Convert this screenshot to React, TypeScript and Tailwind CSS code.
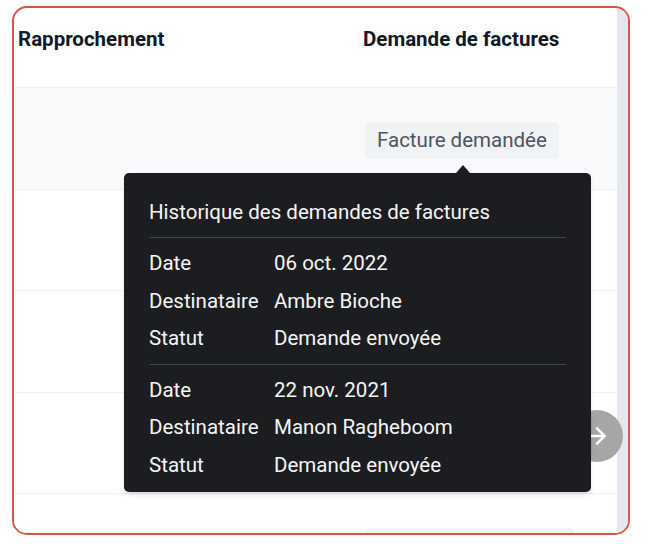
import { ArrowRight } from 'lucide-react';

type Demande = { date: string; destinataire: string; statut: string };

const historique: Demande[] = [
  { date: '06 oct. 2022', destinataire: 'Ambre Bioche', statut: 'Demande envoyée' },
  { date: '22 nov. 2021', destinataire: 'Manon Ragheboom', statut: 'Demande envoyée' },
];

// badges of rows 2-4 sit under the tooltip, so they are left empty
const rows = [
  { badge: 'Facture demandée', hover: true },
  { badge: '', hover: false },
  { badge: '', hover: false },
  { badge: '', hover: false },
  { badge: 'Demander la facture', hover: false },
];

function HistoryTooltip() {
  return (
    <div className="absolute left-[110px] top-[165px] w-[467px] h-[319px] rounded-[5px] bg-[#1b1d21] px-[25px] pt-[20px] text-[#f5f5f6] shadow-md z-10">
      {/* little arrow pointing to the badge */}
      <div className="absolute -top-[8px] left-[332px] w-0 h-0 border-l-[7px] border-r-[7px] border-b-[8px] border-l-transparent border-r-transparent border-b-[#1b1d21]" />
      <div className="h-[38px] flex items-center text-[20.5px]">Historique des demandes de factures</div>
      {historique.map((d) => (
        <div key={d.date}>
          <div className="mt-[6px] mb-[7px] h-px bg-[#3d4551]" />
          {[
            ['Date', d.date],
            ['Destinataire', d.destinataire],
            ['Statut', d.statut],
          ].map(([label, value]) => (
            <div key={label} className="h-[37.5px] flex items-center text-[20.5px]">
              <span className="w-[125px] shrink-0">{label}</span>
              <span>{value}</span>
            </div>
          ))}
        </div>
      ))}
    </div>
  );
}

export default function App() {
  return (
    <div className="w-[658px] h-[544px] bg-white pt-[6px] pl-[12px]" style={{ fontFamily: 'Roboto, "Noto Sans", sans-serif' }}>
      <div className="w-[618px] h-[529px] border-2 border-[#d9553f] rounded-[15px] overflow-hidden flex">
        <div className="relative flex-1">
          {/* header */}
          <div className="grid grid-cols-[349px_1fr] h-[80px] border-b border-[#f0f1f3] pt-[17px] text-[20.5px] font-bold text-[#111827]">
            <div className="pl-[4px] h-[28px] leading-[28px]">Rapprochement</div>
            <div className="h-[28px] leading-[28px]">Demande de factures</div>
          </div>

          {rows.map((r, i) => (
            <div
              key={i}
              className={`grid grid-cols-[349px_1fr] h-[101.5px] border-b border-[#f0f1f3] items-center ${r.hover ? 'bg-[#f9fafb]' : 'bg-white'}`}
            >
              <div />
              <div className="pt-[5px]">
                {r.badge && (
                  <span className="ml-[2px] inline-flex items-center h-[37px] px-[12px] rounded-[5px] bg-[#f1f2f4] text-[20.5px] text-[#4b5563]">
                    {r.badge}
                  </span>
                )}
              </div>
            </div>
          ))}

          {/* scroll button */}
          <button className="absolute left-[557px] top-[402px] w-[52px] h-[52px] rounded-full bg-[#a6a6a6] flex items-center justify-center text-white">
            <ArrowRight size={26} strokeWidth={2.25} />
          </button>

          <HistoryTooltip />
        </div>
        <div className="w-[11px] bg-[#e4e7eb]" />
      </div>
    </div>
  );
}
